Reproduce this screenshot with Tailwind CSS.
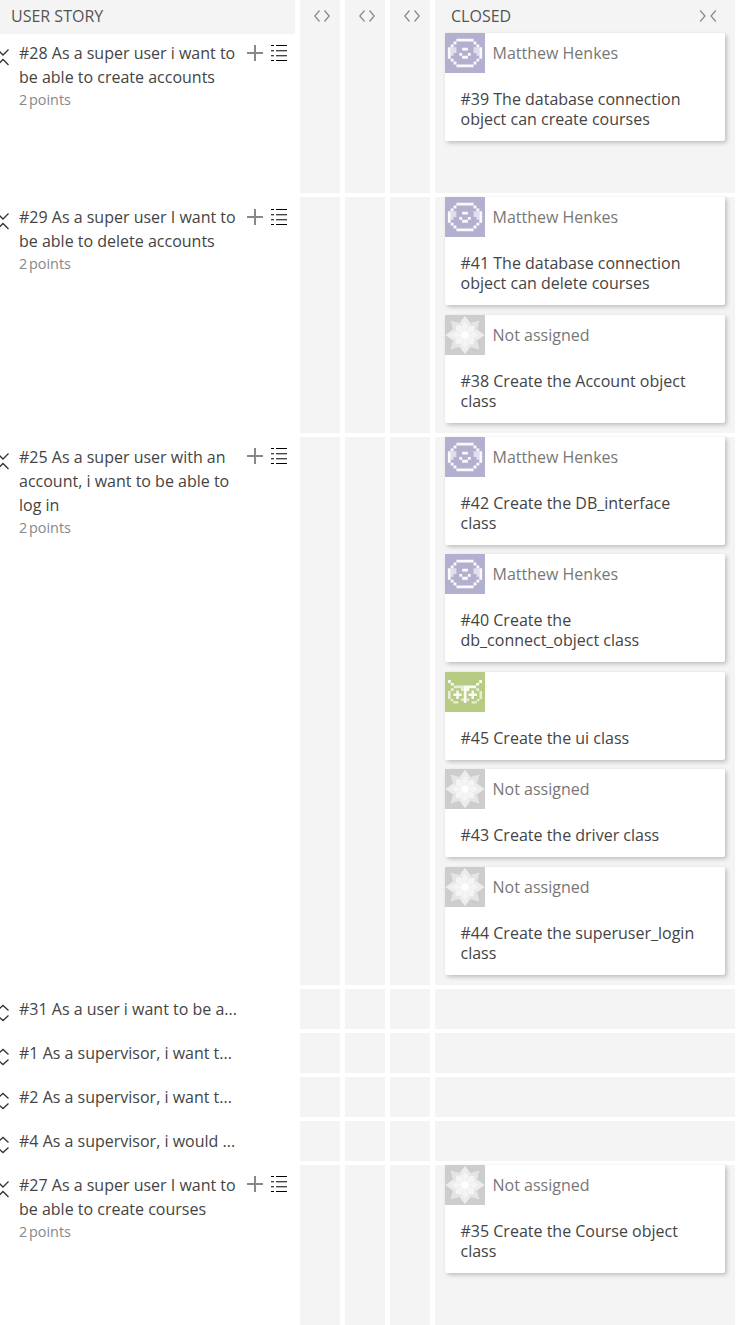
<!DOCTYPE html>
<html lang="en">
<head>
<meta charset="utf-8">
<title>Taskboard</title>
<script src="https://cdn.jsdelivr.net/npm/@tailwindcss/browser@4"></script>
</head>
<body class="h-[1325px] w-[736px] overflow-hidden bg-white font-['Open_Sans',sans-serif] text-base text-[#444]">
<svg class="hidden">
  <symbol id="fold" viewBox="0 0 14 20"><path d="M1.500 2.500 L7 8 L12.500 2.500 M1.500 18 L7 12.500 L12.500 18" fill="none" stroke="#333" stroke-width="1.3"/></symbol>
  <symbol id="unfold" viewBox="0 0 14 20"><path d="M1.500 7.500 L7 2.500 L12.500 7.500 M1.500 12.500 L7 17.500 L12.500 12.500" fill="none" stroke="#333" stroke-width="1.3"/></symbol>
  <symbol id="plus" viewBox="0 0 16 16"><path d="M7 0h2v16H7zM0 7h16v2H0z" fill="#888"/></symbol>
  <symbol id="list" viewBox="0 0 16 16">
    <path d="M0 0h3v1H0zM5 0h11v1H5zM0 15h3v1H0zM5 15h11v1H5z" fill="#000"/>
    <path d="M0 5h3v1H0zM5 5h11v1H5zM0 10h3v1H0zM5 10h11v1H5z" fill="#444"/>
    <path d="M0 6h3v1H0zM5 6h11v1H5zM0 11h3v1H0zM5 11h11v1H5z" fill="#bbb"/>
  </symbol>
  <symbol id="face" viewBox="0 0 14 14">
    <path d="M0 0h14v14H0z" fill="#b3afce"/>
    <path d="M2 5h2v2H3v1H2zM12 5h-2v2h1v1h1z" fill="#fff" fill-opacity=".6"/>
    <path d="M4 2h6v1H4zM3 3h1v1H3zM10 3h1v1h-1zM2 4h1v1H2zM11 4h1v1h-1zM1 5h1v4H1zM12 5h1v4h-1zM2 9h1v1H2zM11 9h1v1h-1zM3 10h1v1H3zM10 10h1v1h-1zM4 11h6v1H4zM6 5.200h2v.9H6zM5 7h1v1H5zM8 7h1v1H8zM6 8h2v1H6z" fill="#fff" fill-opacity=".93"/>
  </symbol>
  <symbol id="owl" viewBox="0 0 40 40">
    <path d="M0 0h40v40H0z" fill="#b8cb82"/>
    <path d="M3 8h2.800v3H3zM34.200 8H37v3h-2.800zM5.800 11h3v2.600h-3zM31.200 11h3v2.600h-3zM18.700 13.600h2.800V31h-2.800zM21.500 13.600h9.700v2.600h-6.900v2.700h-2.800zM11.300 18.500h2.500v8.500h-2.500zM8.300 21.500h8.500v2.500H8.300zM26.500 18.500H29v8.500h-2.500zM23.500 21.500H32v2.500h-8.500z" fill="#fff" fill-opacity=".92"/>
    <path d="M8.800 13.600h9.900v5.300h-2.800v-2.700H8.800zM5.800 16.200h3v2.700h-3zM31.200 16.200h3v2.700h-3zM3 18.900h2.600V27H3zM34.400 18.900H37V27h-2.600zM5.600 27h2.600v2.200H5.600zM8.200 29.200h5.200v2.200H8.200zM16 26.500h2.700v2.500H16zM21.500 26.500h2.700v2.500h-2.700zM26.600 29.200h5.200v2.200h-5.200zM31.800 27h2.600v2.200h-2.600z" fill="#fff" fill-opacity=".66"/>
  </symbol>
  <symbol id="star" viewBox="0 0 40 40">
    <path d="M0 0h40v40H0z" fill="#cdcdcd"/>
    <path d="M20 1l5.500 7L34.500 5.500l-2.500 9 7.500 5.500-7.500 5.500 2.500 9-9-2.500L20 39l-5.500-7-9 2.500 2.500-9L.5 20 8 14.500l-2.500-9 9 2.500z" fill="#e5e5e5"/>
    <path d="M20 1l5 7-5 12-5-12zM39.500 20l-7.500 5-12-5 12-5zM20 39l-5-7 5-12 5 12zM.5 20L8 15l12 5-12 5z" fill="#ededed"/>
    <path d="M20 20L17 11l3-3.500 3 3.500zM20 20l9-3 3.500 3-3.500 3zM20 20l3 9-3 3.500-3-3.500zM20 20l-9 3-3.500-3 3.500-3zM20 20l4-9 5.200.2.200 4.800zM20 20l9 4-.2 5.200-4.800.2zM20 20l-4 9-5.200-.2-.2-4.800zM20 20l-9-4 .2-5.200 4.800-.2z" fill="#f5f5f5"/>
    <circle cx="20" cy="20" r="3.500" fill="#fff"/>
  </symbol>
  <symbol id="expand" viewBox="0 0 16 12"><path d="M5.500 .5L.8 6l4.700 5.500M10.500 .5L15.200 6l-4.700 5.500" fill="none" stroke="#888" stroke-width="1.200"/></symbol>
  <symbol id="collapse" viewBox="0 0 18 12"><path d="M1.200 .5L6 6l-4.800 5.500M16.800 .5L12 6l4.800 5.500" fill="none" stroke="#888" stroke-width="1.200"/></symbol>
</svg>

<header class="flex h-[34px] gap-[5px] leading-8">
  <div class="w-[295px] bg-[#f4f4f4] pl-[11px] text-[#555]">USER STORY</div>
  <div class="w-10 bg-[#f4f4f4] pt-[10px] pl-[14px]"><svg class="h-3 w-4"><use href="#expand"/></svg></div>
  <div class="w-10 bg-[#f4f4f4] pt-[10px] pl-[14px]"><svg class="h-3 w-4"><use href="#expand"/></svg></div>
  <div class="w-10 bg-[#f4f4f4] pt-[10px] pl-[14px]"><svg class="h-3 w-4"><use href="#expand"/></svg></div>
  <div class="flex w-[300px] justify-between bg-[#f4f4f4] pr-[18px] pl-4 text-[#555]">CLOSED<svg class="mt-[10px] h-3 w-[18px]"><use href="#collapse"/></svg></div>
</header>
<main id="board" class="-mt-px flex flex-col gap-1"></main>

<script>
const M = ['face', 'Matthew Henkes'], N = ['star', 'Not assigned'], O = ['owl', ''];
const rows = [
  [160, ['#28 As a super user i want to', 'be able to create accounts'], [[108, 0, M, '#39 The database connection<br>object can create courses']], 'mt-1'],
  [236, ['#29 As a super user I want to', 'be able to delete accounts'], [[108, 0, M, '#41 The database connection<br>object can delete courses'], [108, 10, N, '#38 Create the Account object<br>class']], 'mt-1'],
  [548, ['#25 As a super user with an', 'account, i want to be able to', 'log in'], [
    [108, 0, M, '#42 Create the DB_interface<br>class'], [108, 9, M, '#40 Create the<br>db_connect_object class'],
    [88, 10, O, '#45 Create the ui class'], [88, 9, N, '#43 Create the driver class'],
    [108, 10, N, '#44 Create the superuser_login<br>class']], 'mt-[3px]'],
  [40, ['#31 As a user i want to be a'], []],
  [40, ['#1 As a supervisor, i want t'], []],
  [40, ['#2 As a supervisor, i want t'], []],
  [40, ['#4 As a supervisor, i would '], []],
  [160, ['#27 As a super user I want to', 'be able to create courses'], [[108, 0, N, '#35 Create the Course object<br>class']], 'mt-[3px]']
];
const card = ([h, mt, [icon, name], title]) => `
  <article class="w-[280px] rounded-[2px] bg-white shadow-[2px_2px_4px_rgba(0,0,0,0.22)]" style="height:${h}px;margin-top:${mt}px">
    <div class="flex h-10 items-center gap-[7.500px] text-[#777]"><svg class="h-10 w-10"><use href="#${icon}"/></svg><span>${name}</span></div>
    <p class="mt-4 pl-[15.500px] leading-5 whitespace-nowrap">${title}</p>
  </article>`;
const column = '<div class="w-10 bg-[#f4f4f4]"></div>';
document.getElementById('board').innerHTML = rows.map(([h, title, cards, iconTop]) => {
  const folded = !cards.length;
  return `<section class="flex gap-[5px]" style="height:${h}px">
    <div class="flex w-[295px] items-start pt-2">
      <svg class="-ml-1 mt-[6px] h-5 w-[14px] shrink-0"><use href="#${folded ? 'unfold' : 'fold'}"/></svg>
      <div class="ml-[9px] w-[228px] shrink-0 leading-6 whitespace-nowrap">${title.join('<br>')}${folded ? '<span class="text-black/80">...</span>' : '<div class="text-[14.4px] leading-[22px] text-[#888] [word-spacing:-2px]">2 points</div>'}</div>
      ${folded ? '' : `<div class="${iconTop} flex gap-2"><svg class="h-4 w-4"><use href="#plus"/></svg><svg class="h-4 w-4"><use href="#list"/></svg></div>`}
    </div>${column}${column}${column}
    <div class="w-[300px] bg-[#f4f4f4] pl-[10px]">${cards.map(card).join('')}</div>
  </section>`;
}).join('');
</script>
</body>
</html>
